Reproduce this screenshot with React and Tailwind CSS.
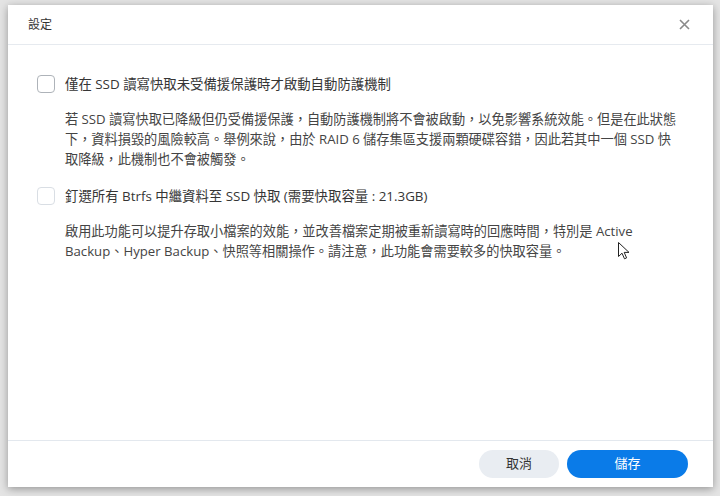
import React from "react";

const font = { fontFamily: '"Open Sans", "Noto Sans CJK TC", sans-serif' };

const Checkbox = ({ light }) => (
  <span
    className={`mt-[1px] h-[18px] w-[18px] shrink-0 rounded-[4px] border bg-white ${
      light ? "border-[#d9dee4]" : "border-[#aeb3b9]"
    }`}
  />
);

const Option = ({ label, light, children }) => (
  <div className="flex gap-[10px]">
    <Checkbox light={light} />
    <div className="flex flex-col">
      <div className="text-[13.4px] leading-[20px] text-[#353535]">{label}</div>
      <p className="mt-[15px] text-[13.2px] leading-[20px] text-[#444]">{children}</p>
    </div>
  </div>
);

const App = () => {
  return (
    <div className="h-[496px] w-[720px] overflow-hidden bg-[#e4e4e4] pl-[8px] pt-[5px]" style={font}>
      <div className="relative flex h-[482px] w-[705px] flex-col bg-white shadow-[0_2px_8px_rgba(0,0,0,0.35)]">
        <div className="flex h-[40px] shrink-0 items-center justify-between border-b border-[#e6eaef] pl-[20px] pr-[23px]">
          <span className="text-[12px] text-[#333]">設定</span>
          <svg width="11" height="11" viewBox="0 0 11 11" className="text-[#8a8a8a]">
            <path d="M1 1L10 10M10 1L1 10" stroke="currentColor" strokeWidth="1.6" />
          </svg>
        </div>

        <div className="flex flex-1 flex-col gap-[17px] pl-[29px] pr-[20px] pt-[29px]">
          <Option label="僅在 SSD 讀寫快取未受備援保護時才啟動自動防護機制">
            若 SSD 讀寫快取已降級但仍受備援保護，自動防護機制將不會被啟動，以免影響系統效能。但是在此狀態
            <br />
            下，資料損毀的風險較高。舉例來說，由於 RAID 6 儲存集區支援兩顆硬碟容錯，因此若其中一個 SSD 快
            <br />
            取降級，此機制也不會被觸發。
          </Option>
          <Option light label="釘選所有 Btrfs 中繼資料至 SSD 快取 (需要快取容量 : 21.3GB)">
            啟用此功能可以提升存取小檔案的效能，並改善檔案定期被重新讀寫時的回應時間，特別是 Active
            <br />
            Backup、Hyper Backup、快照等相關操作。請注意，此功能會需要較多的快取容量。
          </Option>
        </div>

        <div className="flex h-[47px] shrink-0 items-start justify-end gap-[8px] border-t border-[#e3e8ee] pr-[25px] pt-[9px]">
          <button className="h-[28px] w-[80px] rounded-full bg-[#e9edf2] text-[13px] text-[#333]">取消</button>
          <button className="h-[28px] w-[121px] rounded-full bg-[#0a7be8] text-[13px] text-white">儲存</button>
        </div>

        <svg
          className="absolute left-[610px] top-[237px]"
          width="12"
          height="18"
          viewBox="0 0 12 18"
        >
          <path
            d="M0.5 0.5L0.5 14.5L4 11.2L6.5 16.8L8.6 15.9L6.2 10.4L11 10.4Z"
            fill="white"
            stroke="#222"
            strokeWidth="1"
            strokeLinejoin="round"
          />
        </svg>
      </div>
    </div>
  );
};

export default App;
